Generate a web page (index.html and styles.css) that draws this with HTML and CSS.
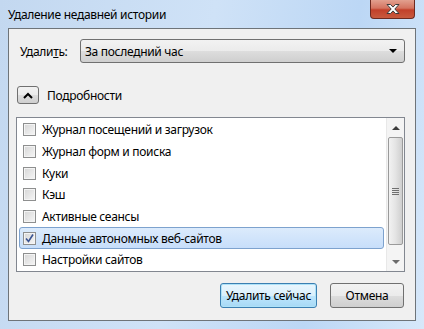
FILE: index.html
```html
<!DOCTYPE html>
<html lang="ru">
<head>
    <meta charset="UTF-8">
    <title>Удаление недавней истории</title>
    <link rel="stylesheet" href="styles.css">
</head>
<body>
    <div class="window">
        <div class="titlebar">
            <span class="title">Удаление недавней истории</span>
            <div class="close-btn">
                <svg width="18" height="12" viewBox="0 0 18 12">
                    <path d="M3 1.5h3.5l2.5 2.6 2.5-2.6H15l-4.2 4.5L15 10.5h-3.5L9 7.9l-2.5 2.6H3l4.2-4.5z" fill="#fff" stroke="#3b3b3b" stroke-width="1"/>
                </svg>
            </div>
        </div>
        <div class="client">
            <div class="range-row">
                <label class="range-label">Удали<u>т</u>ь:</label>
                <div class="select">
                    <span>За последний час</span>
                    <span class="select-arrow"></span>
                </div>
            </div>
            <div class="details-row">
                <div class="toggle">
                    <svg width="10" height="7" viewBox="0 0 10 7">
                        <path d="M1 6l4-4 4 4" fill="none" stroke="#000" stroke-width="2"/>
                    </svg>
                </div>
                <span>Подробности</span>
            </div>
            <div class="listbox">
                <ul class="items">
                    <li class="item"><span class="check"></span>Журнал посещений и загрузок</li>
                    <li class="item"><span class="check"></span>Журнал форм и поиска</li>
                    <li class="item"><span class="check"></span>Куки</li>
                    <li class="item"><span class="check"></span>Кэш</li>
                    <li class="item"><span class="check"></span>Активные сеансы</li>
                    <li class="item selected">
                        <span class="check">
                            <svg width="11" height="11" viewBox="0 0 11 11">
                                <path d="M2 5.5l2.5 3L9 1.5" fill="none" stroke="#3a5493" stroke-width="1.6"/>
                            </svg>
                        </span>Данные автономных веб-сайтов
                    </li>
                    <li class="item"><span class="check"></span>Настройки сайтов</li>
                </ul>
                <div class="scrollbar">
                    <div class="sb-arrow up"></div>
                    <div class="sb-track">
                        <div class="sb-thumb"><span class="grip"></span></div>
                    </div>
                    <div class="sb-arrow down"></div>
                </div>
            </div>
            <div class="buttons">
                <button class="btn default">Удалить сейчас</button>
                <button class="btn">Отмена</button>
            </div>
        </div>
    </div>
</body>
</html>
```

FILE: styles.css
```css
body {
    margin: 0;
    font-family: "Segoe UI", "Noto Sans", sans-serif;
    font-size: 12px;
    letter-spacing: -0.3px;
    color: #000;
}
.window {
    width: 424px;
    height: 329px;
    background: linear-gradient(100deg, #c3d8f0 0%, #cfe2f7 45%, #bcd7f5 75%, #d7e8fa 100%);
    display: flex;
    flex-direction: column;
}
.titlebar {
    height: 29px;
    display: flex;
    align-items: flex-start;
}
.title {
    margin: 6px 0 0 8px;
}
.close-btn {
    margin-left: auto;
    margin-right: 9px;
    width: 43px;
    height: 18px;
    border: 1px solid #6d2a20;
    border-top: none;
    border-radius: 0 0 4px 4px;
    background: linear-gradient(#e2a08f 0%, #d47460 45%, #c2402a 55%, #c85a3e 100%);
    display: flex;
    align-items: center;
    justify-content: center;
}
.client {
    margin: 0 8px 8px 8px;
    height: 290px;
    border: 1px solid #6e7479;
    background: #f0f0f0;
    padding: 10px 10px 0 7px;
}
.range-row {
    display: flex;
    align-items: center;
    height: 24px;
}
.range-label {
    width: 60px;
    margin-left: 4px;
}
.select {
    flex: 1;
    height: 22px;
    border: 1px solid #707070;
    border-radius: 3px;
    background: linear-gradient(#f2f2f2 0%, #ebebeb 50%, #dddddd 51%, #cfcfcf 100%);
    display: flex;
    align-items: center;
    padding: 0 7px 0 4px;
}
.select-arrow {
    margin-left: auto;
    width: 0;
    height: 0;
    border-left: 4px solid transparent;
    border-right: 4px solid transparent;
    border-top: 4px solid #000;
}
.details-row {
    display: flex;
    align-items: center;
    margin-top: 23px;
    height: 18px;
}
.toggle {
    width: 20px;
    height: 16px;
    margin-left: 1px;
    margin-right: 8px;
    border: 1px solid #707070;
    border-radius: 3px;
    background: linear-gradient(#f2f2f2 0%, #ebebeb 50%, #dddddd 51%, #cfcfcf 100%);
    display: flex;
    align-items: center;
    justify-content: center;
}
.listbox {
    margin-top: 13px;
    height: 153px;
    border: 1px solid #828790;
    background: #fff;
    display: flex;
}
.items {
    flex: 1;
    list-style: none;
    margin: 0;
    padding: 1px 2px 0 2px;
    overflow: hidden;
}
.item {
    height: 21.67px;
    display: flex;
    align-items: center;
    padding-left: 3px;
    border: 1px solid transparent;
    border-radius: 3px;
    box-sizing: border-box;
    white-space: nowrap;
}
.item.selected {
    background: linear-gradient(#dcebfc, #c7defa);
    border-color: #7da2ce;
}
.check {
    width: 11px;
    height: 11px;
    border: 1px solid #8e8f8f;
    background: linear-gradient(135deg, #d6d6d6, #f6f6f6);
    box-shadow: inset 0 0 0 1px #f4f4f4;
    margin-right: 6px;
    display: flex;
}
.scrollbar {
    width: 17px;
    display: flex;
    flex-direction: column;
    background: #f4f4f4;
    border-left: 1px solid #e8e8e8;
}
.sb-arrow {
    height: 19px;
    display: flex;
    align-items: center;
    justify-content: center;
}
.sb-arrow.up::after {
    content: "";
    border-left: 4px solid transparent;
    border-right: 4px solid transparent;
    border-bottom: 4px solid #3c3c3c;
}
.sb-arrow.down::after {
    content: "";
    border-left: 4px solid transparent;
    border-right: 4px solid transparent;
    border-top: 4px solid #6b6b6b;
}
.sb-track {
    flex: 1;
}
.sb-thumb {
    height: 106px;
    margin: 0 1px;
    border: 1px solid #9a9a9a;
    border-radius: 2px;
    background: linear-gradient(90deg, #f2f2f2, #e4e4e4 50%, #cfcfcf);
    display: flex;
    align-items: center;
    justify-content: center;
}
.grip {
    width: 7px;
    height: 7px;
    background: repeating-linear-gradient(#6f6f6f 0 1px, transparent 1px 2px);
}
.buttons {
    display: flex;
    justify-content: flex-end;
    gap: 13px;
    margin-top: 11px;
    padding-right: 1px;
}
.btn {
    height: 25px;
    width: 74px;
    padding: 0;
    white-space: nowrap;
    font-family: "Segoe UI", "Noto Sans", sans-serif;
    font-size: 12px;
    letter-spacing: -0.3px;
    color: #000;
    border: 1px solid #707070;
    border-radius: 3px;
    background: linear-gradient(#f2f2f2 0%, #ebebeb 50%, #dddddd 51%, #cfcfcf 100%);
}
.btn.default {
    width: 97px;
    border-color: #3c7fb1;
    box-shadow: inset 0 0 0 1px #aee2f8;
    background: linear-gradient(#eaf6fd 0%, #d9f0fc 50%, #bee6fd 51%, #a7d9f5 100%);
}
```
